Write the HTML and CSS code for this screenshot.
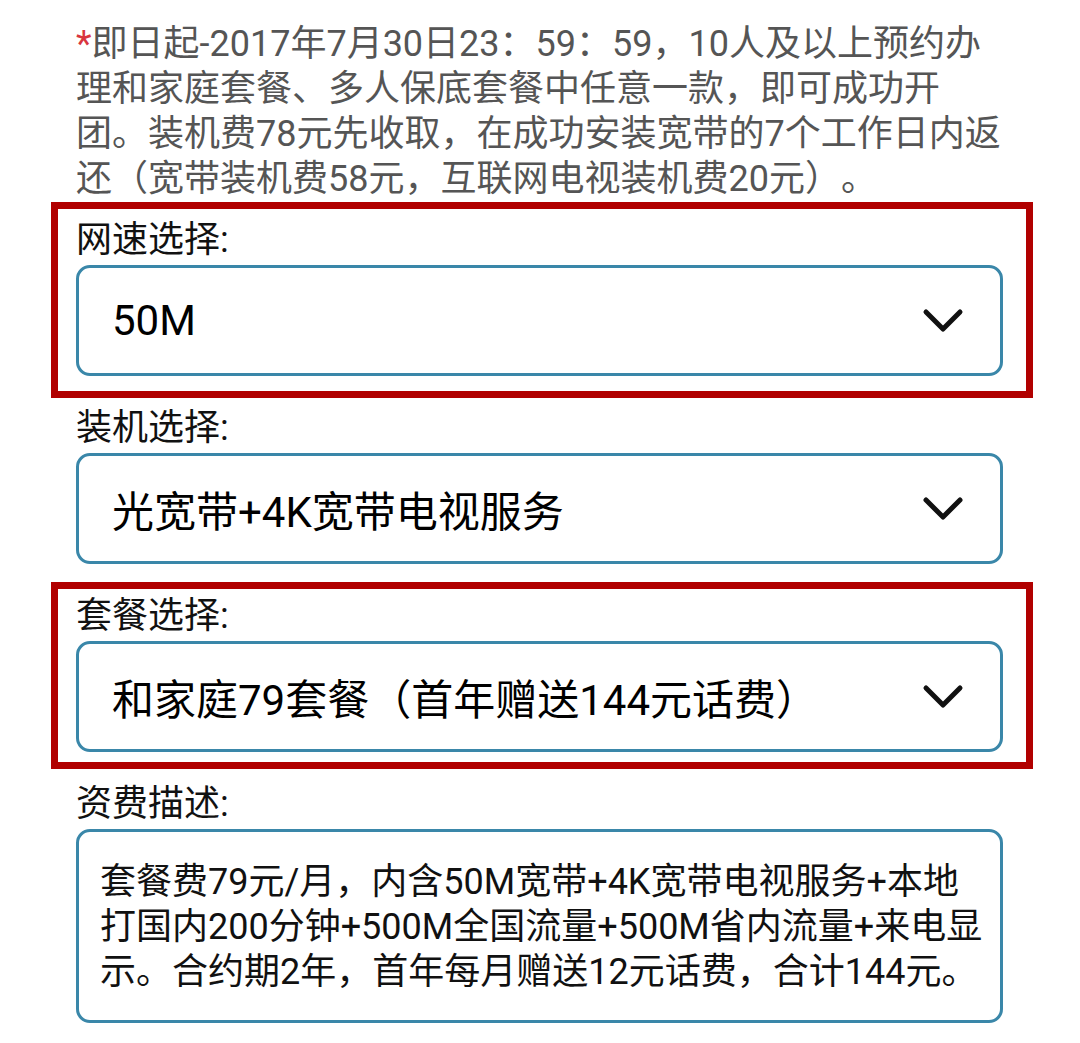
FILE: index.html
```html
<!DOCTYPE html>
<html lang="zh-CN">

<head>
	<meta charset="UTF-8">
	<title>和家庭套餐办理</title>
	<link rel="stylesheet" href="styles.css">
</head>

<body>
	<div class="page">
		<p class="notice"><span class="star">*</span>即日起-2017年7月30日23：59：59，10人及以上预约办<br>理和家庭套餐、多人保底套餐中任意一款，即可成功开<br>团。装机费78元先收取，在成功安装宽带的7个工作日内返<br>还（宽带装机费58元，互联网电视装机费20元）。</p>

		<div class="form">
			<div class="field marked">
				<label>网速选择:</label>
				<div class="select">
					<span>50M</span>
					<svg class="chevron" viewBox="0 0 42 26"><polyline points="4,4 21,21 38,4" /></svg>
				</div>
			</div>

			<div class="field">
				<label>装机选择:</label>
				<div class="select">
					<span>光宽带+4K宽带电视服务</span>
					<svg class="chevron" viewBox="0 0 42 26"><polyline points="4,4 21,21 38,4" /></svg>
				</div>
			</div>

			<div class="field marked tight">
				<label>套餐选择:</label>
				<div class="select">
					<span>和家庭79套餐（首年赠送144元话费）</span>
					<svg class="chevron" viewBox="0 0 42 26"><polyline points="4,4 21,21 38,4" /></svg>
				</div>
			</div>

			<div class="field">
				<label>资费描述:</label>
				<div class="desc">套餐费79元/月，内含50M宽带+4K宽带电视服务+本地<br>打国内200分钟+500M全国流量+500M省内流量+来电显<br>示。合约期2年，首年每月赠送12元话费，合计144元。</div>
			</div>
		</div>
	</div>
</body>

</html>
```

FILE: styles.css
```css
body {
	margin: 0;
	background-color: #fff;
	font-family: Roboto, "Noto Sans CJK SC", sans-serif;
	color: #111;
	text-spacing-trim: space-all;
}

.page {
	width: 927px;
	margin-left: 76px;
	padding-top: 22px;
}

.notice {
	margin: 0 0 16px;
	font-size: 36px;
	line-height: 45px;
	color: #555;
	white-space: nowrap;
}

.notice .star {
	color: #d9363e;
}

.form {
	display: flex;
	flex-direction: column;
	gap: 30px;
}

.field label {
	display: block;
	font-size: 36px;
	line-height: 44px;
	margin-bottom: 3px;
}

.select {
	height: 111px;
	box-sizing: border-box;
	border: 3px solid #3a87a9;
	border-radius: 14px;
	display: flex;
	align-items: center;
	justify-content: space-between;
	padding: 0 36px 0 33px;
	font-size: 42px;
	color: #000;
}

.chevron {
	width: 42px;
	height: 26px;
	fill: none;
	stroke: #111;
	stroke-width: 5;
	stroke-linecap: round;
	stroke-linejoin: round;
}

.desc {
	height: 194px;
	box-sizing: border-box;
	border: 3px solid #3a87a9;
	border-radius: 14px;
	padding: 28px 14px 0 21px;
	font-size: 36px;
	line-height: 45px;
	white-space: nowrap;
}

/* red annotation frames, not affecting flow */
.marked {
	border: 7px solid #b10000;
	margin: -16px -30px -22px -25px;
	padding: 9px 23px 15px 18px;
}

.marked.tight {
	margin: -12px -30px -17px -25px;
	padding: 5px 23px 10px 18px;
}
```
